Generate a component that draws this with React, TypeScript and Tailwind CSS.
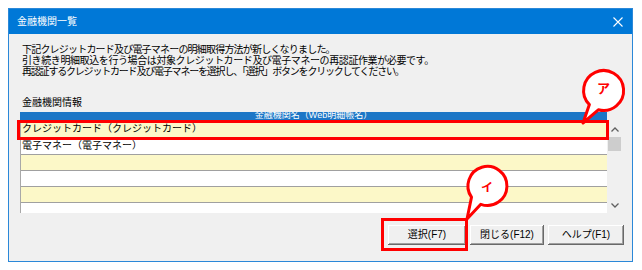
import React from "react";

const rows = [
  { label: "クレジットカード（クレジットカード）", yellow: true },
  { label: "電子マネー（電子マネー）", yellow: false },
  { label: "", yellow: true },
  { label: "", yellow: false },
  { label: "", yellow: true },
  { label: "", yellow: false },
];

function Callouts() {
  // speech bubbles drawn over the dialog
  return (
    <svg className="absolute inset-0 pointer-events-none" width="642" height="270" viewBox="0 0 642 270">
      <path
        d="M589.4 104.6 A20 20 0 1 1 598.3 109.8 L583 123 Z"
        fill="#ffffff"
        stroke="#ff0000"
        strokeWidth="3"
        strokeLinejoin="round"
      />
      <path
        d="M471.5 197.2 A19.5 19.5 0 1 1 480.8 204.3 L467 219 Z"
        fill="#ffffff"
        stroke="#ff0000"
        strokeWidth="3"
        strokeLinejoin="round"
      />
    </svg>
  );
}

export default function App() {
  return (
    <div className="relative w-[642px] h-[270px] bg-white pl-2 pt-2 overflow-hidden font-['Liberation_Sans','Noto_Sans_CJK_JP',sans-serif] text-black">
      <div className="w-[625px] h-[254px] border border-[#2b88d8] bg-[#f0f0f0] flex flex-col">
        {/* title bar */}
        <div className="h-[25px] bg-[#0078d7] flex items-center justify-between pl-2 pr-[9px] text-white">
          <span className="text-[10px] leading-[12px]">金融機関一覧</span>
          <svg width="10" height="10" viewBox="0 0 10 10">
            <path d="M0.5 0.5 L9.5 9.5 M9.5 0.5 L0.5 9.5" stroke="#ffffff" strokeWidth="1.1" />
          </svg>
        </div>

        <div className="flex flex-col pl-[11px] pt-[10px]">
          <div className="pl-[2px] text-[10px] leading-[11px]">
            <div className="tracking-[-0.8px]">下記クレジットカード及び電子マネーの明細取得方法が新しくなりました。</div>
            <div className="tracking-[-0.4px]">引き続き明細取込を行う場合は対象クレジットカード及び電子マネーの再認証作業が必要です。</div>
            <div className="tracking-[-1.2px]">再認証するクレジットカード及び電子マネーを選択し、「選択」ボタンをクリックしてください。</div>
          </div>

          <div className="pl-[2px] mt-[20px] text-[10px] leading-[11px]">金融機関情報</div>

          <div className="mt-[4px] w-[602px] flex flex-col">
            <div className="flex h-[9px]">
              <div className="w-[587px] h-[9px] bg-[#1c76c6] overflow-hidden text-white text-[9px] leading-[9px] text-center">
                <div className="-mt-[1px]">金融機関名（Web明細帳名）</div>
              </div>
              <div className="flex-1" />
            </div>
            <div className="flex h-[92px]">
              <div className="w-[587px] h-[92px] overflow-hidden bg-white border-l border-[#a8a8a8] flex flex-col">
                {rows.map((r, i) => (
                  <div
                    key={i}
                    className={
                      (i === 0 ? "h-[18px] leading-[15px] " : "h-4 leading-[14px] ") +
                      "shrink-0 border-b border-[#a0a0a0] pl-[1px] text-[10px] " +
                      (r.yellow ? "bg-[#fcf8c8]" : "bg-white")
                    }
                  >
                    {r.label}
                  </div>
                ))}
              </div>
              <div className="w-[15px] flex flex-col items-center">
                <div className="h-4 w-full flex items-center justify-center">
                  <svg width="8" height="5" viewBox="0 0 8 5">
                    <path d="M0.5 4.5 L4 1 L7.5 4.5" fill="none" stroke="#606060" strokeWidth="1.3" />
                  </svg>
                </div>
                <div className="h-[14px] w-[13px] bg-[#cdcdcd]" />
                <div className="flex-1" />
                <div className="h-4 w-full flex items-center justify-center">
                  <svg width="8" height="5" viewBox="0 0 8 5">
                    <path d="M0.5 0.5 L4 4 L7.5 0.5" fill="none" stroke="#606060" strokeWidth="1.3" />
                  </svg>
                </div>
              </div>
            </div>
          </div>

          <div className="mt-[12px] w-[604px] flex justify-end gap-[4px]">
            <button className="w-[78px] h-[20px] bg-[#f0f0f0] text-[10px] leading-[12px] shadow-[inset_-1px_-1px_0_#696969,inset_1px_1px_0_#ffffff,inset_-2px_-2px_0_#a0a0a0]">
              選択(F7)
            </button>
            <button className="w-[74px] h-[20px] bg-[#f0f0f0] text-[10px] leading-[12px] shadow-[inset_-1px_-1px_0_#696969,inset_1px_1px_0_#ffffff,inset_-2px_-2px_0_#a0a0a0]">
              閉じる(F12)
            </button>
            <button className="w-[76px] h-[20px] bg-[#f0f0f0] text-[10px] leading-[12px] shadow-[inset_-1px_-1px_0_#696969,inset_1px_1px_0_#ffffff,inset_-2px_-2px_0_#a0a0a0]">
              ヘルプ(F1)
            </button>
          </div>
        </div>
      </div>

      {/* red highlight frames */}
      <div className="absolute left-[17px] top-[120px] w-[592px] h-[20px] border-[3px] border-[#ff0000]" />
      <div className="absolute left-[381px] top-[218px] w-[87px] h-[33px] border-[3px] border-[#ff0000]" />

      <Callouts />
      <span className="absolute left-[597px] top-[81px] text-[13px] leading-[16px] text-[#ff0000] font-bold">ア</span>
      <span className="absolute left-[481px] top-[180px] text-[12px] leading-[16px] text-[#ff0000] font-bold">イ</span>
    </div>
  );
}
